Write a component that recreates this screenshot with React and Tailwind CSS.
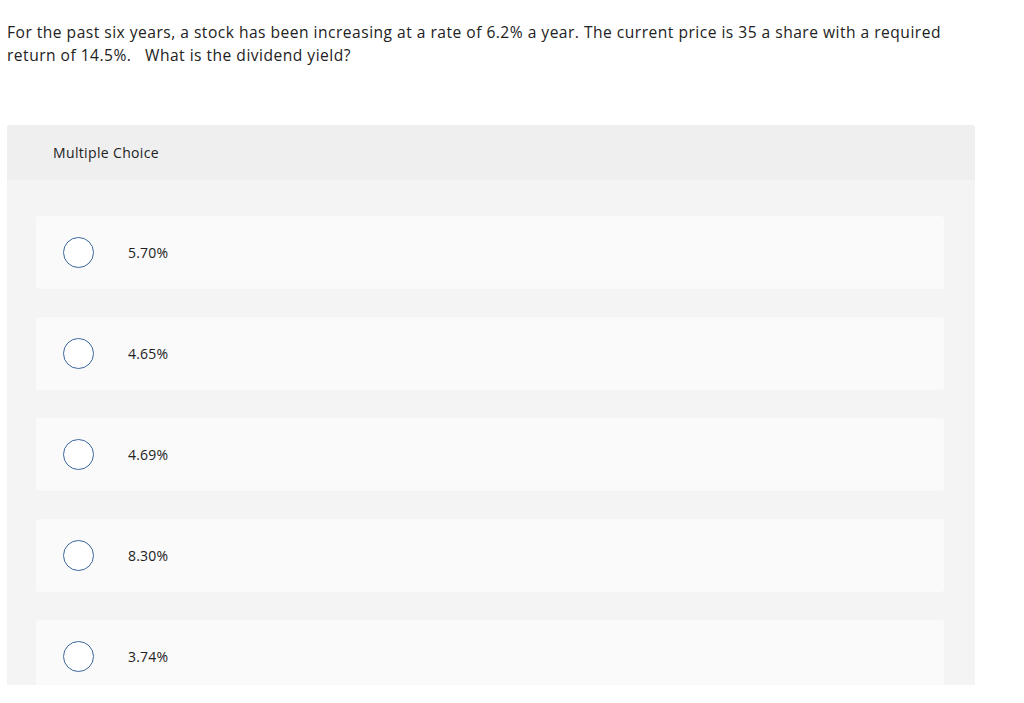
import React from 'react';

const options = ['5.70%', '4.65%', '4.69%', '8.30%', '3.74%'];

const App = () => {
  return (
    <div className="w-[1024px] h-[703px] bg-white text-[#222] overflow-hidden" style={{ fontFamily: '"Open Sans", "Liberation Sans", sans-serif' }}>
      {/* Question */}
      <div className="pt-[21px] px-[7px] w-[1024px] whitespace-nowrap text-[15.6px] leading-[23px] tracking-[0.48px]">
        For the past six years, a stock has been increasing at a rate of 6.2% a year. The current price is 35 a share with a required
        <br />
        return of 14.5%.&nbsp;&nbsp; What is the dividend yield?
      </div>

      {/* Multiple choice panel */}
      <div className="mt-[58px] ml-[7px] w-[968px] h-[560px] overflow-hidden rounded-t-[3px] bg-[#f4f4f4]">
        <div className="h-[55px] bg-[#efefef] flex items-center pl-[46px] text-[14px] tracking-[0.35px]">
          Multiple Choice
        </div>
        <div className="pt-[36px] pl-[29px] pr-[31px] flex flex-col gap-[28px]">
          {options.map((opt, i) => (
            <div key={i} className="h-[73px] shrink-0 bg-[#fafafa] rounded-[4px] flex items-center pl-[27px]">
              <span className="w-[31px] h-[31px] rounded-full border border-[#3c679c] bg-white shrink-0" />
              <span className="ml-[34px] text-[14px] tracking-[0.2px]">{opt}</span>
            </div>
          ))}
        </div>
      </div>
    </div>
  );
};

export default App;
